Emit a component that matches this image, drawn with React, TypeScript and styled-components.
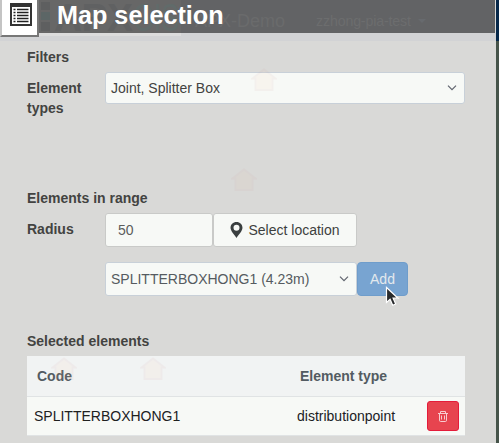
import React from "react";
import styled, { createGlobalStyle } from "styled-components";

const Global = createGlobalStyle`
  * { box-sizing: border-box; }
  body { margin: 0; overflow: hidden; font-family: "Liberation Sans", Arial, sans-serif; font-size: 14px; color: #434341; }
  button, input { font: inherit; }
`;

const Screen = styled.div`
  width: 499px;
  height: 443px;
  overflow: hidden;
  position: relative;
  background: linear-gradient(#06284a 0 41px, #46544a 41px);
`;
const Panel = styled.main`
  width: 496px;
  height: 443px;
  display: flex;
  flex-direction: column;
  background: #d9d9d7;
`;
const Header = styled.header`
  height: 33px;
  flex: none;
  width: 495px;
  display: flex;
  position: relative;
  background: #626365;
`;
const Strip = styled.div`
  height: 8px;
  flex: none;
  background: linear-gradient(#dcdcdc, #dcdcdc) left top / 181px 3px no-repeat, #d2d3d5;
`;
const MenuButton = styled.button`
  position: relative;
  width: 39px;
  height: 37px;
  flex: none;
  padding: 0 0 0 8px;
  border: 0;
  border-left: 2px solid #c4c4c4;
  border-right: 2px solid #777;
  border-bottom: 2px solid #777;
  background: #fff;
  svg { display: block; }
`;
const Title = styled.h1`
  position: relative;
  margin: 0 0 0 18px;
  font-size: 25.2px;
  line-height: 31px;
  color: #fff;
  white-space: nowrap;
`;
const Ghost = styled.div`
  position: absolute;
  inset: 0;
  svg { display: block; }
`;
const Body = styled.div`
  width: 438px;
  margin-left: 27px;
  display: flex;
  flex-direction: column;
`;
const Heading = styled.h2<{ $top: number }>`
  margin: ${p => p.$top}px 0 0;
  font-size: 14px;
  line-height: 20px;
  height: 20px;
`;
const Row = styled.div<{ $top: number }>`
  display: flex;
  margin-top: ${p => p.$top}px;
`;
const Label = styled.label`
  width: 78px;
  flex: none;
  padding-top: 6px;
  font-weight: bold;
  line-height: 20px;
`;
const Select = styled.div<{ $w: number; $h: number }>`
  width: ${p => p.$w}px;
  height: ${p => p.$h}px;
  flex: none;
  display: flex;
  align-items: center;
  justify-content: space-between;
  padding: 0 7px 0 5px;
  border: 1px solid #c8d0d8;
  border-radius: 3px;
  background: #f7f9f6;
  color: ${p => (p.$w < 300 ? "#555b60" : "#434341")};
  white-space: nowrap;
`;
const Input = styled.input`
  width: 108px;
  height: 34px;
  padding: 0 12px;
  border: 1px solid #c9cac8;
  border-radius: 3px;
  background: #f7f9f6;
  color: #5c5d5c;
`;
const LocationButton = styled.button`
  width: 144px;
  height: 34px;
  padding: 0;
  display: flex;
  align-items: center;
  justify-content: center;
  gap: 5px;
  border: 1px solid #c9cac8;
  border-radius: 3px;
  background: #f7f9f6;
  color: #3d3f3d;
  white-space: nowrap;
`;
const AddButton = styled.button`
  width: 51px;
  height: 34px;
  padding: 0;
  border: 1px solid #6f9dcb;
  border-radius: 4px;
  background: #78a4d1;
  color: #e3e9ed;
`;
const Table = styled.div`
  margin-top: 5px;
  background: #f7f9f6;
`;
const TableRow = styled.div<{ $head?: boolean }>`
  display: grid;
  grid-template-columns: ${p => (p.$head ? "263px 1fr" : "263px 130px 32px")};
  align-items: center;
  height: ${p => (p.$head ? 41 : 39)}px;
  padding-left: ${p => (p.$head ? 10 : 7)}px;
  border-bottom: 1px solid #e0e3e4;
  background: ${p => (p.$head ? "#f1f3f3" : "#f7f9f6")};
  color: ${p => (p.$head ? "#535b62" : "#20211f")};
  font-weight: ${p => (p.$head ? "bold" : "normal")};
`;
const DeleteButton = styled.button`
  width: 32px;
  height: 30px;
  padding: 0;
  display: flex;
  align-items: center;
  justify-content: center;
  border: 1px solid #e41c3a;
  border-radius: 3px;
  background: #e7444f;
`;
const HouseMark = styled.svg<{ $x: number; $y: number }>`
  position: absolute;
  left: ${p => p.$x}px;
  top: ${p => p.$y}px;
`;
const Cursor = styled.svg`
  position: absolute;
  left: 385px;
  top: 286px;
`;

const Chevron = () => (
  <svg width="10" height="6" viewBox="0 0 10 6" fill="none" stroke="#60646e" strokeWidth="1.2">
    <path d="M1 .7 5 4.7 9 .7" />
  </svg>
);

const House = ({ x, y, fill = "#ffc39c" }: { x: number; y: number; fill?: string }) => (
  <HouseMark $x={x} $y={y} width="26" height="24" viewBox="0 0 26 24" opacity={0.08}>
    <path d="M1.5 10.5 13 1.5 24.5 10.5H21.5V22H4.5V10.5Z" fill={fill} stroke="#cf9090" strokeWidth="1.8" />
  </HouseMark>
);

const HeaderGhost = () => (
  <Ghost>
    <svg width="495" height="33" viewBox="0 0 495 33" fontFamily="Liberation Sans">
      <rect x="39" width="142" height="33" fill="#676767" />
      <g fill="#5e5f60">
        <rect x="41" y="2" width="9" height="8" />
        <rect x="41" y="12" width="9" height="8" fill="#5c6666" />
        <rect x="41" y="22" width="9" height="9" />
      </g>
      <text x="54" y="31" fontSize="39" fontWeight="bold" fill="#606162" textLength="79">APX</text>
      <text x="133" y="31" fontSize="39" fill="#616b6a" textLength="46" lengthAdjust="spacingAndGlyphs">GIS</text>
      <text x="195" y="27" fontSize="18" fill="#6a6b6c" textLength="90">APX-Demo</text>
      <text x="316" y="26" fontSize="14.2" fill="#6c6d6e" textLength="95">zzhong-pia-test</text>
      <path d="M418 19h8l-4 4z" fill="#676a6e" />
    </svg>
  </Ghost>
);

export default function App() {
  return (
    <Screen>
      <Global />
      <Panel>
        <Header>
          <HeaderGhost />
          <MenuButton aria-label="Menu">
            <svg width="22" height="35" viewBox="0 0 22 35">
              <path d="M0 3H22V26H0Z" fill="#333" />
              <path d="M2 7H20V24H2Z" fill="#fff" />
              <path d="M3.5 9.5h2M3.5 12.5h2M3.5 15.5h2M3.5 18.5h2M3.5 21.5h2M7 9.5h11.5M7 12.5h11.5M7 15.5h11.5M7 18.5h11.5M7 21.5h11.5" stroke="#222" strokeWidth="1.4" />
            </svg>
          </MenuButton>
          <Title>Map selection</Title>
        </Header>
        <Strip />
        <Body>
          <Heading $top={6}>Filters</Heading>
          <Row $top={5}>
            <Label>Element types</Label>
            <Select $w={360} $h={32}>Joint, Splitter Box<Chevron /></Select>
          </Row>
          <Heading $top={70}>Elements in range</Heading>
          <Row $top={5}>
            <Label>Radius</Label>
            <Input defaultValue="50" />
            <LocationButton>
              <svg width="13" height="16" viewBox="0 0 12 15">
                <path fillRule="evenodd" d="M6 0C2.7 0 .4 2.4.4 5.5.4 8.8 4.2 12 6 15c1.8-3 5.6-6.2 5.6-9.5C11.6 2.4 9.3 0 6 0Zm0 2.6a2.8 2.8 0 1 1 0 5.6 2.8 2.8 0 0 1 0-5.6Z" fill="#3a3f3f" />
              </svg>
              Select location
            </LocationButton>
          </Row>
          <Row $top={15}>
            <Label />
            <Select $w={252} $h={34}>SPLITTERBOXHONG1 (4.23m)<Chevron /></Select>
            <AddButton>Add</AddButton>
          </Row>
          <Heading $top={35}>Selected elements</Heading>
          <Table>
            <TableRow $head><span>Code</span><span>Element type</span></TableRow>
            <TableRow>
              <span>SPLITTERBOXHONG1</span>
              <span>distributionpoint</span>
              <DeleteButton aria-label="Delete">
                <svg width="10" height="12" viewBox="0 0 10 12" fill="none" stroke="#f8cdd0">
                  <path d="M0 3.5h10M2.5 3V1.5h5v2M1.5 3.5v6.7q0 1.3 1 1.3h5q1 0 1-1.3V3.5M3.5 5.5V9.5M6.5 5.5V9.5" />
                </svg>
              </DeleteButton>
            </TableRow>
          </Table>
        </Body>
      </Panel>
      <House x={251} y={68} />
      <House x={231} y={168} fill="#e8c090" />
      <House x={51} y={357} />
      <House x={140} y={357} />
      <Cursor width="16" height="22" viewBox="0 0 16 22">
        <path d="M1.5 1.5v15l3.6-3.2 2.6 6 3-1.3-2.6-5.8H13Z" fill="#292b2d" stroke="#fff" strokeWidth="1.2" />
      </Cursor>
    </Screen>
  );
}
